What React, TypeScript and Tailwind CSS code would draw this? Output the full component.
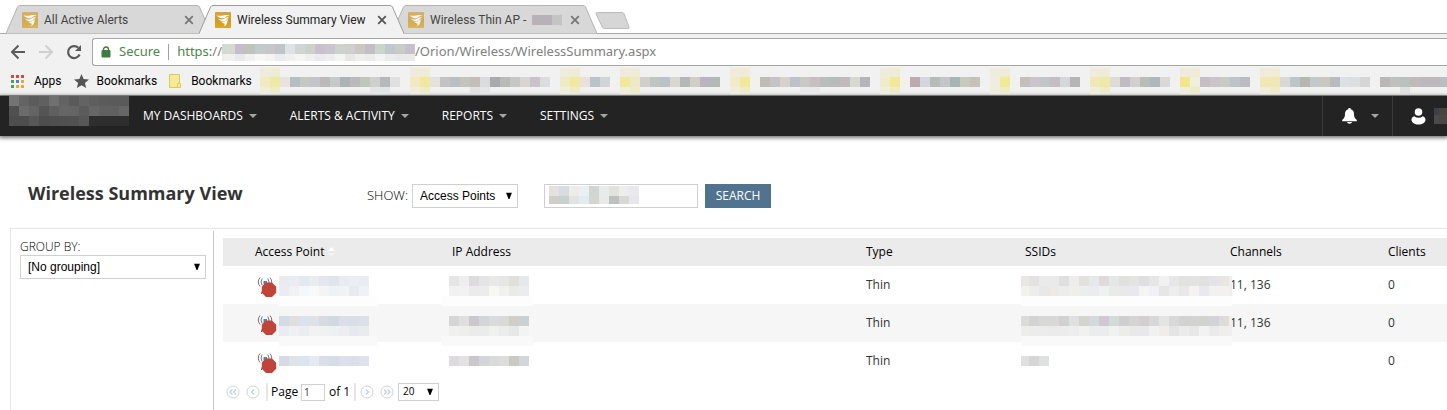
import type { ReactNode } from "react";

type MosaicRow = {
  height: number;
  cells?: string;
  // solid strip: [x, width, colour]
  strip?: [number, number, string];
};

type MosaicProps = {
  rows: MosaicRow[];
  width: number;
  height: number;
  firstWidth?: number;
};

// Pixelated block that hides private text. Cells are hex colours, "." is empty.
function Mosaic({ rows, width, height, firstWidth = 10 }: MosaicProps) {
  let y = 0;

  return (
    <svg
      width={width}
      height={height}
      shapeRendering="crispEdges"
      aria-hidden="true"
      className="block shrink-0 overflow-visible"
    >
      {rows.map((row, r) => {
        const top = y;
        y += row.height;

        return (
          <g key={r}>
            {row.strip ? (
              <rect
                x={row.strip[0]}
                y={top}
                width={row.strip[1]}
                height={row.height}
                fill={row.strip[2]}
              />
            ) : null}
            {(row.cells ? row.cells.split(" ") : []).map((cell, c) =>
              cell === "." ? null : (
                <rect
                  key={c}
                  x={c === 0 ? 0 : firstWidth + (c - 1) * 10}
                  y={top}
                  width={c === 0 ? firstWidth : 10}
                  height={row.height}
                  fill={`#${cell}`}
                />
              ),
            )}
          </g>
        );
      })}
    </svg>
  );
}

function Favicon({ faded }: { faded?: boolean }) {
  return (
    <svg
      viewBox="0 0 16 16"
      className={faded ? "size-4 shrink-0 opacity-75" : "size-4 shrink-0"}
      aria-hidden="true"
    >
      <defs>
        <linearGradient id="gold" x1="0" y1="0" x2="0" y2="1">
          <stop offset="0" stopColor="#d9a441" />
          <stop offset="0.5" stopColor="#cf9a28" />
          <stop offset="1" stopColor="#dba927" />
        </linearGradient>
      </defs>
      <rect width="16" height="16" rx="0.8" fill="url(#gold)" />
      <path
        d="M1.500 3.200c2.400 1 4.400 .6 6.800 .2 2.400-.4 4.800-.6 6.400 .4-2.800 .3-4.200 1.100-5.400 2.400-2.800 .6-6.200-.5-7.800-3z"
        fill="#fff"
      />
      <path
        d="M3 6.600c2.400 1.400 4.800 1.200 6.400-.1 1.400-1.100 2.800-1.500 5-1.300-2.200 .8-2.700 1.900-3.500 3.300-2.200 1.500-6.200 1-7.900-1.900z"
        fill="#fff"
      />
      <path
        d="M6 9.600c1.900 .4 3.700 .1 4.900-1l2.500-1.800c-.9 1.600-1 2.600-1.200 3.700-.4 2-1.500 3.100-3.900 3.900 1.200-1.200 1.700-2.200 1.300-3-1.300 .1-2.800-.5-3.600-1.800z"
        fill="#fff"
      />
    </svg>
  );
}

function BrowserTab({
  title,
  active,
  children,
}: {
  title: string;
  active?: boolean;
  children?: ReactNode;
}) {
  return (
    <div
      className={
        active
          ? "relative z-10 -mr-3 flex h-[29px] w-[205px] shrink-0 items-center pr-[17px] pl-4 text-[#222]"
          : "relative -mr-3 flex h-[29px] w-[205px] shrink-0 items-center pr-[17px] pl-4 text-[#444]"
      }
    >
      <svg
        viewBox="0 0 205 29"
        className="absolute inset-0 h-full w-full"
        aria-hidden="true"
      >
        <path
          d="M0 28.500 L11.500 2 Q12.500 .5 14 .5 H191 Q192.500 .5 193.500 2 L205 28.500"
          fill={active ? "#f1f1f1" : "#d8d8d8"}
          stroke={active ? "#9c9c9c" : "#b3b3b3"}
        />
        {active ? <path d="M1 28.500H204" stroke="#f1f1f1" /> : null}
      </svg>
      <button
        type="button"
        className="relative flex min-w-0 flex-1 items-center gap-1.5 text-left text-xs whitespace-nowrap"
      >
        <Favicon faded={!active} />
        <span>{title}</span>
        {children}
      </button>
      <button type="button" aria-label="Close tab" className="relative">
        <svg viewBox="0 0 10 10" className="size-2.5" aria-hidden="true">
          <path
            d="M1.200 1.200l7.600 7.600M8.800 1.200l-7.600 7.600"
            stroke={active ? "#555" : "#777"}
            strokeWidth="1.800"
          />
        </svg>
      </button>
    </div>
  );
}

function TabStrip() {
  return (
    <div className="flex h-[34px] items-end border-b border-[#a9a9a9] pl-1.5 font-[Roboto,'Open_Sans',sans-serif]">
      <div className="-mb-px flex">
        <BrowserTab title="All Active Alerts" />
        <BrowserTab title="Wireless Summary View" active />
        <BrowserTab title="Wireless Thin AP -">
          <Mosaic
            width={30}
            height={10}
            rows={[{ height: 10, cells: "b9b0b8 b7b1b8 c4c3c6" }]}
          />
        </BrowserTab>
      </div>
      <button type="button" aria-label="New tab" className="mb-[3px] ml-2.5">
        <svg
          width="35"
          height="18"
          viewBox="0 0 35 18"
          className="block"
          aria-hidden="true"
        >
          <path
            d="M2.500 .5H27q1.500 0 2 1.200L34 15q.5 1.500-1 1.500H9.500q-1.500 0-2.200-1.500L1 2Q.5 .5 2.500 .5z"
            fill="#d6d6d6"
            stroke="#bcbcbc"
          />
        </svg>
      </button>
    </div>
  );
}

function AddressBar() {
  return (
    <div className="flex h-[30px] items-center pl-2.5 font-['Noto_Sans','Open_Sans',sans-serif] text-[#5a5a5a]">
      <button type="button" aria-label="Back" className="mr-3">
        <svg width="16" height="16" viewBox="0 0 16 16" aria-hidden="true">
          <path
            d="M15 8H2.500M8.500 1.500L2 8l6.500 6.500"
            fill="none"
            stroke="currentColor"
            strokeWidth="2"
          />
        </svg>
      </button>
      <button
        type="button"
        aria-label="Forward"
        className="mr-3 text-[#d0d0d0]"
      >
        <svg width="16" height="16" viewBox="0 0 16 16" aria-hidden="true">
          <path
            d="M1 8h12.500M7.500 1.500L14 8l-6.500 6.500"
            fill="none"
            stroke="currentColor"
            strokeWidth="2"
          />
        </svg>
      </button>
      <button type="button" aria-label="Reload" className="mr-2.5">
        <svg width="16" height="16" viewBox="0 0 16 16" aria-hidden="true">
          <path
            d="M13.600 10.500A6 6 0 1 1 12.300 3.800"
            fill="none"
            stroke="currentColor"
            strokeWidth="2.200"
          />
          <path d="M15 1v6H9z" fill="currentColor" />
        </svg>
      </button>
      <div className="flex h-7 min-w-0 flex-1 items-center overflow-hidden rounded-l-[3px] border border-r-0 border-[#a6a6a6] bg-white pl-2 text-[13px] whitespace-nowrap">
        <svg
          width="10"
          height="12"
          viewBox="0 0 10 12"
          className="shrink-0"
          aria-hidden="true"
        >
          <path d="M1 4.500h8v6.500H1z" fill="#3f7d3f" stroke="#3f7d3f" />
          <path
            d="M2.500 5V3.500a2.500 2.500 0 0 1 5 0V5"
            fill="none"
            stroke="#3f7d3f"
            strokeWidth="1.400"
          />
        </svg>
        <span className="ml-2 text-[#4d854d]">Secure</span>
        <span className="mx-2 h-4 w-px bg-[#a0a0a0]" />
        <span className="text-[#4d854d]">https:</span>
        <span className="text-[#808080]">//</span>
        <Mosaic
          width={193}
          height={17}
          firstWidth={3}
          rows={[
            {
              height: 10,
              cells:
                "d3d7d8 d5d8d3 c4bdca bfc3bc c2cacb c8c6c9 bec4c9 dfe2e4 cfd5d5 d0d0ca c7c1cd c9c5d0 cdd2cd d0cfd0 c9c8c3 bfbfc4 cdd4cd c1c8cd c9cbc7 c6c0cc",
            },
            {
              height: 7,
              cells:
                "eeeeee f0f1ee e9e9ec f1f1f1 f8f8f7 f2f3f2 ececee f0f0f0 f5f5f4 efefef e9e9ee eeeeee f4f4f4 e7e7e7 efefef ececec f3f3f3 ececee e9e9e9 e9e9ea",
            },
          ]}
        />
        <span className="text-[#808080]">
          /Orion/Wireless/WirelessSummary.aspx
        </span>
      </div>
    </div>
  );
}

type Bookmark = { cells: string; folder?: string; tail?: string };

const hiddenBookmarks: Bookmark[] = [
  {
    cells:
      "f0ebc2 f0e9a3 ebe2e0 b6bfbf c5c7c3 c3c3c8 bbbab8 c5c9ca adb2b4 b9bab9 c2c5bd cfcfcd b7b8bc e0e0e0",
    tail: ". . . . . . . . . e6e5e6 e2e5e7",
  },
  {
    cells:
      "f0e9c2 f1e89f e3e2e0 c3c3c3 b9c0c2 c2c4bd c3bfb8 d9dbdd aaaaad b9bbb9 c6c6c6 d6d5d4 c8c2cb dadcde",
    tail: ". . . . e2e1e2 e4e5e6",
  },
  { cells: "f0eac2 f1e8a2 eae0de b9c4c9 d2d4d6" },
  {
    cells:
      "f1e89a eee8c4 d0cfcd bfc5bf bac1c9 d8d7d3 b4b6b7 cfcec9 b9b4bd b3b8b9",
  },
  {
    cells:
      "f0ecca f2e899 f1f2ed bdbcb7 c4c4c6 d6d2c9 bec1cb c8c9c3 c6c0c3 bbbcbc b9bbbb bfbabc d8d8d2 b5b5b8",
    tail: ". . . . . e9e9eb ebe8eb",
  },
  {
    cells:
      "f0ecca f2e899 f1f2ed bcaab0 d3d6da b8bbba c3c6c6 a9b4b5 c7cabd c5c2b9",
  },
  { cells: "efeddf f2e896 f1f2ed c4bfbb cac4cd c1c5c8 c2bec2 d6d7d9 b5b5b6" },
  { cells: "efe9b8 efe9a8 dedcdb c1bbc3 d3cfcd b9bdb6 b0b7ba d9d9d9" },
  { cells: "f2e68a f0eedd c5bec2 c8c4ca c9cac6 bfc2c6 bbbbc2" },
  {
    cells:
      "f0e7b5 f0e7b5 d8d8d4 bfc4c9 b6b8b0 c5c8ca c9c8bd b8bcbf dde0e4 dcdedf d5d5d5",
  },
  {
    cells: "b9b8b7 bfc1be bbc0bf bfbbbb bdb8bb bbb9ba bcbdbf",
    folder: ". .",
    tail: "dfdfdf",
  },
];

const appColors = [
  "#d64b3c", "#d64b3c", "#d64b3c",
  "#4f9e5a", "#4d7ff0", "#e3ad2b",
  "#4f9e5a", "#e3ad2b", "#e3ad2b",
];

function BookmarksBar() {
  return (
    <div className="flex h-[29px] items-center overflow-hidden border-b border-[#9b9b9b] pl-[11px] font-[Roboto,'Open_Sans',sans-serif] text-xs whitespace-nowrap text-black">
      <a href="#apps" className="mr-3 flex items-center gap-2.5">
        <svg width="13" height="13" shapeRendering="crispEdges" aria-hidden="true">
          {appColors.map((color, i) => (
            <rect
              key={i}
              x={(i % 3) * 5}
              y={Math.floor(i / 3) * 5}
              width="3"
              height="3"
              fill={color}
            />
          ))}
        </svg>
        Apps
      </a>
      <a href="#bookmarks" className="mr-3 flex items-center gap-2">
        <svg width="15" height="14" viewBox="0 0 15 14" aria-hidden="true">
          <path
            d="M7.500 0l2.100 4.900 5.400 .5-4.100 3.500 1.300 5.100-4.700-2.800L2.800 14l1.300-5.100L0 5.400l5.400-.5z"
            fill="#555"
          />
        </svg>
        Bookmarks
      </a>
      <a href="#folder" className="mr-2 flex items-center gap-2.5">
        <svg width="12" height="14" viewBox="0 0 12 14" aria-hidden="true">
          <path
            d="M.5 .5h10v9h1v4H.5z"
            fill="#f6ea96"
            stroke="#dcca5c"
          />
          <path d="M8.500 13.500v-4h2" fill="none" stroke="#dcca5c" />
        </svg>
        Bookmarks
      </a>
      <div className="flex gap-2.5">
        {hiddenBookmarks.map((bookmark, i) => (
          <a key={i} href="#hidden" aria-label="Bookmark">
            <Mosaic
              width={bookmark.cells.split(" ").length * 10}
              height={26}
              rows={[
                { height: 9, cells: bookmark.folder ?? "efecdd efebd5" },
                { height: 10, cells: bookmark.cells },
                {
                  height: 7,
                  cells: `${bookmark.folder ?? "efeedd eeebcb"} ${bookmark.tail ?? ""}`.trim(),
                },
              ]}
            />
          </a>
        ))}
      </div>
    </div>
  );
}

function Caret() {
  return (
    <svg width="8" height="4" viewBox="0 0 8 4" aria-hidden="true">
      <path d="M0 0h8L4 4z" fill="#a5a5a5" />
    </svg>
  );
}

const menus = ["MY DASHBOARDS", "ALERTS & ACTIVITY", "REPORTS", "SETTINGS"];

function NavBar() {
  return (
    <nav className="flex h-10 items-stretch overflow-hidden bg-[#232323] pl-[9px] text-xs text-white shadow-[0_1px_4px_1px_rgba(0,0,0,0.55)]">
      <Mosaic
        width={120}
        height={30}
        rows={[
          {
            height: 10,
            cells:
              "747474 646464 5c5c5c 606060 707070 636363 5a5a5a 636363 5e5e5e 5b5b5b 5a5a5a 5a5a5a",
          },
          {
            height: 10,
            cells:
              "505050 6b6b6b 646464 555555 5f5f5f 666666 646464 5b5b5b 666666 606060 606060 666666",
          },
          {
            height: 10,
            cells:
              "4d4d4d 4d4d4d 575757 4d4d4d 4f4f4f 505050 515151 575757 2e2e2e 2e2e2e 2e2e2e 2e2e2e",
          },
        ]}
      />
      <div className="ml-3.5 flex flex-1 items-center gap-[33px]">
        {menus.map((menu) => (
          <button
            key={menu}
            type="button"
            className="flex items-center gap-1.5 whitespace-nowrap"
          >
            {menu}
            <Caret />
          </button>
        ))}
      </div>
      <button
        type="button"
        aria-label="Notifications"
        className="flex w-[70px] items-center gap-3.5 border-l border-[#3a3a3a] pl-[19px]"
      >
        <svg width="15" height="16" viewBox="0 0 15 16" aria-hidden="true">
          <path
            d="M7.500 0c.8 0 1.300 .5 1.300 1.200 2.200 .6 3.200 2.300 3.200 4.800 0 3 .8 4.500 2.800 6v1.200H.2V12C2.200 10.500 3 9 3 6c0-2.500 1-4.200 3.200-4.800C6.200 .5 6.700 0 7.500 0z"
            fill="#fff"
          />
          <path d="M4.800 14h5.400q-.7 1.800-2.700 1.800T4.800 14z" fill="#fff" />
        </svg>
        <Caret />
      </button>
      <button
        type="button"
        aria-label="Account"
        className="flex w-[55px] items-center gap-2 border-l border-[#3a3a3a] pl-[18px]"
      >
        <svg
          width="15"
          height="17"
          viewBox="0 0 15 17"
          className="shrink-0"
          aria-hidden="true"
        >
          <circle cx="7.500" cy="4" r="3.800" fill="#fff" />
          <path
            d="M3.300 8.200q1.700 1.500 4.200 1.500t4.200-1.500c1.700 .5 2.800 1.800 2.800 3.500 0 3-3.300 4.800-7 4.800s-7-1.800-7-4.800c0-1.700 1.100-3 2.800-3.500z"
            fill="#fff"
          />
        </svg>
        <Mosaic
          width={13}
          height={16}
          firstWidth={5}
          rows={[
            { height: 7, cells: "3b4046 4a4340" },
            { height: 9, cells: "4b4b4b 4a4745" },
          ]}
        />
      </button>
    </nav>
  );
}

function SelectBox({
  id,
  label,
  value,
  compact,
  className,
}: {
  id: string;
  label?: string;
  value: string;
  compact?: boolean;
  className: string;
}) {
  return (
    <div className={`relative flex ${className}`}>
      <select
        id={id}
        aria-label={label}
        className={
          compact
            ? "w-full appearance-none border border-[#d0d0d0] bg-white px-1 text-black outline-none"
            : "w-full appearance-none border border-[#d0d0d0] bg-white px-[7px] text-black outline-none"
        }
      >
        <option>{value}</option>
      </select>
      <svg
        width="6"
        height="7"
        viewBox="0 0 6 7"
        className="pointer-events-none absolute top-1/2 right-1.5 -translate-y-1/2"
        aria-hidden="true"
      >
        <path d="M0 0h6L3.500 6.500h-1z" fill="#000" />
      </svg>
    </div>
  );
}

function PageHeader() {
  return (
    <header className="flex h-[92px] items-end pb-5 pl-7">
      <h1 className="w-[339px] shrink-0 pb-[3px] text-lg leading-6 font-bold text-[#333]">
        Wireless Summary View
      </h1>
      <div className="flex h-[25px] items-center text-xs">
        <label
          htmlFor="show"
          className="w-[45px] text-[13px] font-light whitespace-nowrap text-black"
        >
          SHOW:
        </label>
        <SelectBox
          id="show"
          value="Access Points"
          className="h-6 w-[106px] font-['Liberation_Sans',Arial,sans-serif]"
        />
        <div className="relative ml-[26px] flex">
          <input
            type="text"
            aria-label="Search text"
            className="h-6 w-[154px] border border-[#d0d0d0] px-1 outline-none"
          />
          <div className="pointer-events-none absolute top-0.5 left-[5px]">
            <Mosaic
              width={90}
              height={18}
              rows={[
                {
                  height: 10,
                  cells:
                    "e4e2df d8dce1 eeece9 ebf0f3 d3d5d2 e9eaea e2e2e1 ededed e9e9ed",
                },
                {
                  height: 8,
                  cells:
                    "d0cec9 c8d0cf e3e3df e4ebee d3d5cf e9e9e8 bcc1bd d9d8d7 e6e7ed",
                },
              ]}
            />
          </div>
        </div>
        <button
          type="button"
          className="ml-[7px] h-6 w-[66px] bg-[#50738f] text-white"
        >
          SEARCH
        </button>
      </div>
    </header>
  );
}

// Antenna with a red "down" badge
function AccessPointIcon() {
  return (
    <svg
      width="20"
      height="20"
      viewBox="0 0 20 20"
      className="shrink-0"
      aria-label="Down"
      role="img"
    >
      <g fill="none" stroke="#777">
        <path d="M3 .5q-3.500 4.500 0 9M5.200 1.500q-2.500 3.500 0 7M13 .5q3.500 4.500 0 9M10.800 1.500q2.500 3.500 0 7" />
      </g>
      <path d="M8 5L4.500 17" stroke="#444" />
      <path d="M6.500 4h3.500v3H6.500z" fill="#4a86b4" />
      <path
        d="M9 5.500h6l4.200 4.200v6L15 19.900H9l-4.200-4.200v-6z"
        fill="#c1443b"
      />
    </svg>
  );
}

type AccessPoint = {
  offset: number;
  strip?: string;
  name: string[];
  ip: string[];
  ssids: string[];
  channels: string;
  clients: number;
};

const accessPoints: AccessPoint[] = [
  {
    offset: 10,
    strip: "#fdfdfd",
    name: [
      "e8ecf1 ebecf1 e3e9f1 ebecf2 e5e6ed e0e5ed e8ecf1 ebeef2 e9edf2",
      "e9edf1 f2f2f4 f6f7fb f9f9f9 f3f4f4 eff2f5 f1f2f5 e7ebf0 eef2f6",
    ],
    ip: [
      "e5e5e5 eeeeee dedbde e5e5e7 e9e9e7 e6e6e4 e0dfd9 e5e9ec",
      "f1f1f1 f2f2f2 ebebec ececed f7f8f6 f0f0ed e9ebe9 ececee",
    ],
    ssids: [
      "eae6e5 e2e2e2 ebeaea e9eae9 dfdfe0 ecedec e2e1dc e5e9eb e0dadf e6e8e7 e0e0df e3e4e3 dfdee0 e5e6e5 f1f1f1 e7e7e9 e2e2e0 e4e3e3 e1e1df e3e3e9 e7e6e4",
      "f1f1ef ecedec e8e8e8 ebeae9 ececec eeeeec eceded ecebed f0f2f1 eaeae8 eae9ea e9e8ec f4f4f4 f1f0f2 e6e6e7 ededed e8e8e8 f4f3f1 e8e9ee f2f1ef f2f1ef",
    ],
    channels: "11, 136",
    clients: 0,
  },
  {
    offset: 12,
    strip: "#f9f9f9",
    name: [
      "d6dae4 dedee3 dae2ec e0e1e7 d5dae3 d1d9e3 dbdde7 dadee7 dbe1e9",
      "ebecf1 f0f0f3 ebedf0 f2f2f2 f1f1f2 eeeff1 ecedf0 e8e9ee e9ebef",
    ],
    ip: [
      "d6d6d6 dfdfdf cbc8cd d3d5d7 dbdadd d8d9d8 d0cec9 cbd0d3",
      "f0f0ee eeefed ebebeb ebebeb f0f1ef ebecec e6e8e7 f3f3f3",
    ],
    ssids: [
      "dcdbda d3d3d3 d9d8d8 d9d8d7 d1d1d1 dfe1e0 d4d4ce d4d9dd d0c9d1 d5dad8 cfcfcf d5d4d5 d2cfd0 d8d8db e4e4e4 d8d7da d2d2d0 d4d3d3 d3d3ce d2d3d8 dddcdb",
      "eeedeb ebeceb ececec ecebeb ececec ecedec f1f1f1 ececed ecebed f0f2f1 ececeb e9e9e9 e8e8eb f1f1f1 eeedeb e4e4e4 ebebeb e7e7e7 f2f2f2 eaeaeb efeeec",
    ],
    channels: "11, 136",
    clients: 0,
  },
  {
    offset: 14,
    name: ["d6dae4 e0e2e9 dce5ef e5e9f2 dbdde7 d5dee8 dbe0ea dadfe9 dce3ec"],
    ip: ["dddbde e2e2e2 cac7ce d2d6db dadada dcdddc cac9c3 d3d7dc"],
    ssids: ["e0e0df d6d6d6 dfe0e2"],
    channels: "",
    clients: 0,
  },
];

function hiddenRows(
  ap: AccessPoint,
  lines: string[],
  [x, width]: [number, number],
  backing?: string,
): MosaicRow[] {
  const rows: MosaicRow[] = [{ height: ap.offset }];

  for (const cells of lines) {
    rows.push({
      height: 10,
      cells,
      strip: ap.strip && backing ? [x, width, backing] : undefined,
    });
  }

  if (ap.strip) {
    rows.push({ height: 10, strip: [x, width, ap.strip] });
  }

  return rows;
}

function AccessPointTable() {
  return (
    <table className="w-full table-fixed text-left text-xs">
      <colgroup>
        <col className="w-8" />
        <col className="w-[197px]" />
        <col />
        <col className="w-[159px]" />
        <col className="w-[205px]" />
        <col className="w-[158px]" />
        <col className="w-[59px]" />
      </colgroup>
      <thead>
        <tr className="h-7 bg-[#ebebeb] text-black [&>th]:font-normal">
          <th />
          <th>
            <span className="flex items-center gap-1">
              Access Point
              <svg width="7" height="10" viewBox="0 0 7 10" aria-hidden="true">
                <path d="M0 4l3.500-4L7 4z" fill="#fff" />
                <path d="M0 6l3.500 4L7 6z" fill="#f3f3f3" />
              </svg>
            </span>
          </th>
          <th>IP Address</th>
          <th>Type</th>
          <th>SSIDs</th>
          <th>Channels</th>
          <th>Clients</th>
        </tr>
      </thead>
      <tbody>
        {accessPoints.map((ap, i) => (
          <tr key={i} className="h-[38px] text-[#333] even:bg-[#f6f6f6]">
            <td colSpan={2}>
              <div className="flex items-center gap-0.5 pl-[34px]">
                <div className="pt-1">
                  <AccessPointIcon />
                </div>
                <Mosaic
                  width={90}
                  height={38}
                  rows={hiddenRows(ap, ap.name, [0, 98])}
                />
              </div>
            </td>
            <td>
              <div className="-ml-[3px]">
                <Mosaic
                  width={80}
                  height={38}
                  rows={hiddenRows(ap, ap.ip, [-8, 92])}
                />
              </div>
            </td>
            <td>Thin</td>
            <td>
              <div className="relative z-10 -ml-1">
                <Mosaic
                  width={205}
                  height={38}
                  firstWidth={8}
                  rows={hiddenRows(ap, ap.ssids, [0, 211], "#f0efee")}
                />
              </div>
            </td>
            <td>{ap.channels}</td>
            <td>{ap.clients}</td>
          </tr>
        ))}
      </tbody>
    </table>
  );
}

function PagerButton({ label, path }: { label: string; path: string }) {
  return (
    <button type="button" aria-label={label}>
      <svg width="14" height="14" viewBox="0 0 14 14" aria-hidden="true">
        <circle cx="7" cy="7" r="6" fill="#fff" stroke="#d3d3d3" />
        <path d={path} fill="none" stroke="#b5cfe3" strokeWidth="1.200" />
      </svg>
    </button>
  );
}

function Pager() {
  return (
    <div className="flex h-6 items-center pl-[3px] text-xs text-black">
      <div className="flex gap-1.5">
        <PagerButton
          label="First page"
          path="M6.500 4.500L4 7l2.500 2.500M10 4.500L7.500 7 10 9.500"
        />
        <PagerButton label="Previous page" path="M8 4.500L5.500 7 8 9.500" />
      </div>
      <span className="ml-1.5 h-[18px] w-0.5 bg-[#e6e6e6]" />
      <label htmlFor="page" className="ml-[3px] w-[30px]">
        Page
      </label>
      <input
        id="page"
        type="text"
        defaultValue="1"
        className="h-[17px] w-6 border border-[#d0d0d0] px-0.5 text-[10px] text-[#333] outline-none"
      />
      <span className="ml-1 w-[25px] whitespace-nowrap">of 1</span>
      <span className="h-[18px] w-0.5 bg-[#e6e6e6]" />
      <div className="ml-1 flex gap-1.5">
        <PagerButton label="Next page" path="M6 4.500L8.500 7 6 9.500" />
        <PagerButton
          label="Last page"
          path="M4 4.500L6.500 7 4 9.500M7.500 4.500L10 7 7.500 9.500"
        />
      </div>
      <SelectBox
        id="page-size"
        label="Rows per page"
        value="20"
        compact
        className="ml-1 h-[18px] w-[41px] text-[10px]"
      />
    </div>
  );
}

export default function App() {
  return (
    <div className="min-h-screen overflow-hidden bg-white font-['Open_Sans','Noto_Sans',sans-serif]">
      <TabStrip />
      <div className="bg-[#f1f1f1] pt-[3px]">
        <AddressBar />
        <BookmarksBar />
      </div>
      <NavBar />
      <PageHeader />
      <main className="ml-2.5 flex h-[calc(100vh-228px)] min-h-[182px] border-t border-l border-[#e6e6e6] pt-0.5">
        <aside className="w-[203px] shrink-0 border-r border-[#c6c6c6] pt-1.5 pl-[9px]">
          <label
            htmlFor="group-by"
            className="block h-[18px] text-xs leading-5 font-light text-black"
          >
            GROUP BY:
          </label>
          <SelectBox
            id="group-by"
            value="[No grouping]"
            className="h-6 w-[186px] text-xs font-['Liberation_Sans',Arial,sans-serif]"
          />
        </aside>
        <section className="min-w-0 flex-1 pt-[7px] pl-[9px]">
          <AccessPointTable />
          <Pager />
        </section>
      </main>
    </div>
  );
}
